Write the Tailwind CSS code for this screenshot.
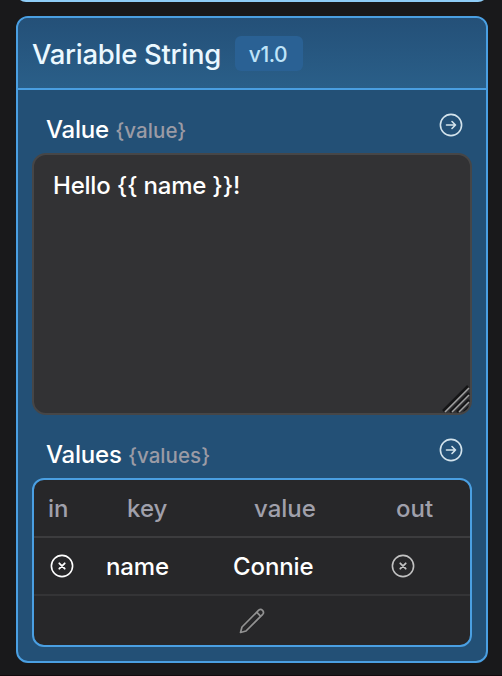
<!DOCTYPE html>
<html lang="en">
<head>
<meta charset="utf-8">
<title>Variable String</title>
<script src="https://cdn.jsdelivr.net/npm/@tailwindcss/browser@4"></script>
</head>
<body class="w-[502px] h-[676px] overflow-hidden bg-[#19191b] font-['Inter','Liberation_Sans',sans-serif] font-[450] text-white whitespace-nowrap">
<svg class="hidden">
  <symbol id="arrow" viewBox="0 0 24 24"><g fill="none" stroke="currentColor" stroke-linecap="round" stroke-linejoin="round"><circle cx="12" cy="12" r="10.6" stroke-width="1.6"/><path d="M7.5 12h9M13 8.5l3.5 3.5-3.5 3.5" stroke-width="1.6"/></g></symbol>
  <symbol id="cross" viewBox="0 0 24 24"><g fill="none" stroke="currentColor" stroke-linecap="round"><circle cx="12" cy="12" r="10.6" stroke-width="1.6"/><path d="M9.3 9.3l5.4 5.4M14.7 9.3l-5.4 5.4" stroke-width="1.8"/></g></symbol>
</svg>
<div class="h-[676px] flex flex-col pl-4 pr-[14px] border-b border-[#120a0d]">
  <div class="h-4 shrink-0 overflow-hidden flex items-start"><div class="w-full h-3 -mt-[10px] rounded-b-[10px] bg-[#8fcdf8]"></div></div>
  <section class="h-[647px] shrink-0 flex flex-col border-2 border-[#4a9fe2] rounded-xl overflow-hidden bg-[#235076]">
    <header class="h-[72px] shrink-0 flex items-center gap-[15px] pl-[14px] pt-px border-b-2 border-[#4a9fe2] bg-linear-to-b from-[#245078] to-[#2a5f89]">
      <h1 class="w-[188px] pt-px text-[27.5px] leading-9 tracking-[-0.28px] text-[#ebf8ff]">Variable String</h1>
      <span class="w-[68px] h-[35px] rounded-md bg-[#2a6194] flex items-center justify-center pt-[2px] pr-[2px] text-[21px] tracking-[-0.4px] text-[#bee3f8]">v1.0</span>
    </header>
    <div class="px-[14px] flex flex-col">
      <div class="h-[63px] flex items-start justify-between pl-[14px] pr-[9px] pt-[23px]">
        <div class="pt-px text-[24px] leading-8 tracking-[-0.2px]">Value <span class="text-[20.5px] tracking-[0.1px] text-[#9b9ba5]">{value}</span></div>
        <svg class="size-6 text-[#d3e3ec]"><use href="#arrow"/></svg>
      </div>
      <div class="relative h-[262px] border-2 border-[#464647] rounded-[14px] bg-[#323234] overflow-hidden px-[19px] pt-[15px] text-[24px] leading-8 tracking-[-0.22px]">Hello {{ name }}!
        <svg class="absolute right-0 bottom-0 w-7 h-7" viewBox="0 0 28 28" fill="none"><g stroke="#151516" stroke-width="2.5"><path d="M1 26L26 1M8 27L27 8M15 27L27 15M22 27L27 22"/></g><g stroke="#a0a0a0" stroke-width="1.5"><path d="M3 27L27 3M10 27L27 10M17 27L27 17M24 27L27 24"/></g></svg>
      </div>
      <div class="h-[63px] flex items-start justify-between pl-[14px] pr-[9px] pt-[23px]">
        <div class="pt-px text-[24px] leading-8 tracking-[-0.2px]">Values <span class="text-[20.5px] tracking-[0.05px] text-[#9b9ba5]">{values}</span></div>
        <svg class="size-6 text-[#d3e3ec]"><use href="#arrow"/></svg>
      </div>
      <div class="h-[169px] border-2 border-[#4a9fe2] rounded-xl overflow-hidden bg-[#272729]">
        <div class="h-[58px] pt-[2px] border-b-2 border-[#3c3c3e] grid grid-cols-[72px_110px_160px_1fr] items-center pl-[14px] text-[24px] font-[550] text-[#a0a0ab]">
          <span>in</span><span class="pl-[7px]">key</span><span class="pl-6">value</span><span class="pl-[6px]">out</span>
        </div>
        <div class="h-[58px] border-b-2 border-[#343436] grid grid-cols-[72px_110px_160px_1fr] items-center pl-[14px] text-[24px] tracking-[-0.1px]">
          <svg class="ml-[2px] size-6"><use href="#cross"/></svg><span class="-ml-[14px] pt-[2px]">name</span><span class="pl-[3px] pt-[2px]">Connie</span><svg class="ml-[1px] size-6 text-[#c2c2c2]"><use href="#cross"/></svg>
        </div>
        <div class="h-[49px] flex items-center justify-center">
          <svg class="size-7" viewBox="0 0 28 28" fill="none" stroke="#929292" stroke-width="1.7" stroke-linejoin="round"><path d="M2.5 25.5L4 20L20.7 3.2Q22.7 1.5 24.5 3.3Q26.4 5.3 24.7 7.3L8 24Z"/><path d="M18.7 5.2L22.7 9.3"/></svg>
        </div>
      </div>
    </div>
  </section>
</div>
</body>
</html>
